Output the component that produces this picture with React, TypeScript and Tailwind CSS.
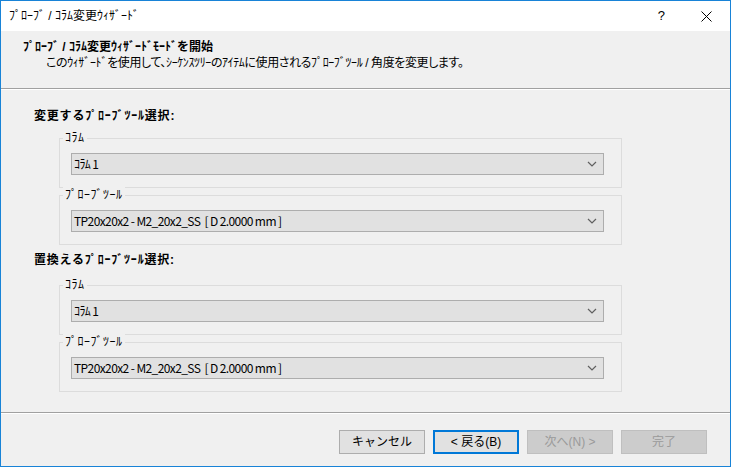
import { ReactNode } from "react"

const font = { fontFamily: '"Liberation Sans", "Noto Sans CJK JP", sans-serif' }

const Chevron = () => (
  <svg width="10" height="6" viewBox="0 0 10 6" className="mr-[6px]">
    <path d="M1 1 L5 5 L9 1" fill="none" stroke="#606060" strokeWidth="1.2" />
  </svg>
)

const Select = ({ value }: { value: string }) => (
  <div className="flex h-[22px] w-[533px] items-center justify-between border border-[#adadad] bg-[#e1e1e1] pl-[2px] text-[12px] text-black">
    <span className="whitespace-pre font-['Noto_Sans_CJK_JP',sans-serif] leading-none tracking-[-0.6px]">
      {value}
    </span>
    <Chevron />
  </div>
)

const Group = ({ label, children }: { label: string; children: ReactNode }) => (
  <div className="relative ml-[58px] h-[50px] w-[563px] border border-[#dcdcdc] pl-[11px] pt-[14px]">
    <span className="absolute -top-[9px] left-[3px] bg-[#f0f0f0] px-[2px] text-[12px] leading-[16px] tracking-[0.5px] text-black">
      {label}
    </span>
    {children}
  </div>
)

const Button = ({
  label,
  focused,
  disabled,
}: {
  label: string
  focused?: boolean
  disabled?: boolean
}) => (
  <button
    className={
      disabled
        ? "h-[24px] w-[86px] border border-[#bfbfbf] bg-[#cccccc] text-[12px] text-[#9a9a9a]"
        : focused
          ? "h-[24px] w-[86px] border-2 border-[#0078d7] bg-[#e1e1e1] text-[12px] text-black"
          : "h-[24px] w-[86px] border border-[#adadad] bg-[#e1e1e1] text-[12px] text-black"
    }
  >
    {label}
  </button>
)

export default function App() {
  return (
    <div
      style={font}
      className="flex h-[467px] w-[731px] flex-col border border-[#1883d7] bg-[#f0f0f0] text-black"
    >
      {/* title bar */}
      <div className="flex h-[30px] items-center bg-white">
        <span className="ml-[8px] flex-1 text-[12px]">ﾌﾟﾛｰﾌﾞ / ｺﾗﾑ変更ｳｨｻﾞｰﾄﾞ</span>
        <span className="mr-[36px] text-[13px]">?</span>
        <svg width="11" height="11" viewBox="0 0 11 11" className="mr-[18px]">
          <path d="M0.5 0.5 L10.5 10.5 M10.5 0.5 L0.5 10.5" stroke="#000" strokeWidth="1" />
        </svg>
      </div>

      {/* header */}
      <div className="h-[58px] border-b border-[#a0a0a0] pt-[8px] shadow-[0_1px_0_#ffffff]">
        <div className="ml-[22px] text-[12px] font-bold leading-[16px]">
          ﾌﾟﾛｰﾌﾞ / ｺﾗﾑ変更ｳｨｻﾞｰﾄﾞﾓｰﾄﾞを開始
        </div>
        <div className="ml-[45px] text-[12px] leading-[16px] tracking-[-0.4px] [font-feature-settings:'palt']">
          このｳｨｻﾞｰﾄﾞを使用して、ｼｰｹﾝｽﾂﾘｰのｱｲﾃﾑに使用されるﾌﾟﾛｰﾌﾞﾂｰﾙ / 角度を変更します。
        </div>
      </div>

      {/* content */}
      <div className="flex-1 pt-[19px]">
        <div className="ml-[33px] text-[12px] font-bold leading-[16px] tracking-[0.8px]">
          変更するﾌﾟﾛｰﾌﾞﾂｰﾙ選択:
        </div>
        <div className="mt-[14px] flex flex-col gap-[7px]">
          <Group label="ｺﾗﾑ">
            <Select value="ｺﾗﾑ 1" />
          </Group>
          <Group label="ﾌﾟﾛｰﾌﾞﾂｰﾙ">
            <Select value="TP20x20x2 - M2_20x2_SS  [ D 2.0000 mm ]" />
          </Group>
        </div>
        <div className="ml-[33px] mt-[7px] text-[12px] font-bold leading-[16px] tracking-[0.8px]">
          置換えるﾌﾟﾛｰﾌﾞﾂｰﾙ選択:
        </div>
        <div className="mt-[17px] flex flex-col gap-[7px]">
          <Group label="ｺﾗﾑ">
            <Select value="ｺﾗﾑ 1" />
          </Group>
          <Group label="ﾌﾟﾛｰﾌﾞﾂｰﾙ">
            <Select value="TP20x20x2 - M2_20x2_SS  [ D 2.0000 mm ]" />
          </Group>
        </div>
      </div>

      {/* footer */}
      <div className="h-[54px] border-t border-[#a0a0a0] pt-[17px] shadow-[inset_0_1px_0_#ffffff]">
        <div className="mr-[23px] flex justify-end gap-[8px]">
          <Button label="キャンセル" />
          <Button label="< 戻る(B)" focused />
          <Button label="次へ(N) >" disabled />
          <Button label="完了" disabled />
        </div>
      </div>
    </div>
  )
}
